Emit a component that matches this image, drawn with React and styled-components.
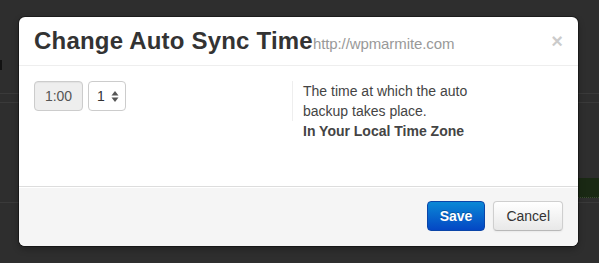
import React from "react";
import styled, { createGlobalStyle } from "styled-components";

const Global = createGlobalStyle`
  html, body { margin: 0; padding: 0; }
  body {
    background: #2e2e2e;
    font-family: "Liberation Sans", Arial, Helvetica, sans-serif;
    font-size: 14px;
    line-height: 20px;
    color: #333;
  }
`;

const Page = styled.div`
  position: relative;
  width: 599px;
  height: 263px;
  overflow: hidden;
  background: #2e2e2e;
`;

const BgLayer = styled.div`
  display: flex;
  flex-direction: column;
  width: 100%;
  height: 100%;
`;

const Mark = styled.div`
  width: 2px;
  height: 10px;
  margin-top: 60px;
  background: #121212;
`;

const Rule = styled.div`
  height: 1px;
  margin-top: ${(p) => p.$gap}px;
  background: #3a3a3a;
`;

const GreenBar = styled.div`
  align-self: flex-end;
  width: 21px;
  height: 19px;
  margin-top: ${(p) => p.$gap}px;
  background: #1a2914;
  border-bottom: 1px dotted #3c4a34;
`;

const Modal = styled.div`
  position: absolute;
  top: 17px;
  left: 19px;
  width: 559px;
  background: #fff;
  border-radius: 6px;
  box-shadow: 0 0 0 1px rgba(0, 0, 0, 0.35), 0 3px 7px rgba(0, 0, 0, 0.3);
  overflow: hidden;
`;

const Header = styled.div`
  display: flex;
  align-items: flex-start;
  height: 30px;
  padding: 9px 15px;
  border-bottom: 1px solid #eee;
`;

const Title = styled.h3`
  flex: 1;
  height: 30px;
  margin: 0;
  font-size: 24px;
  line-height: 30px;
  font-weight: bold;
  letter-spacing: 0.2px;
  color: #333;
  white-space: nowrap;
`;

const Sub = styled.small`
  font-size: 15px;
  line-height: 1;
  font-weight: normal;
  letter-spacing: -0.1px;
  color: #999;
`;

const Close = styled.button`
  margin-top: 5px;
  padding: 0;
  border: 0;
  background: none;
  font-family: "Liberation Sans", Arial, sans-serif;
  font-size: 20px;
  font-weight: bold;
  line-height: 20px;
  color: #000;
  opacity: 0.2;
  cursor: pointer;
`;

const Body = styled.div`
  display: flex;
  height: 90px;
  padding: 15px;
`;

const Controls = styled.div`
  display: flex;
  align-items: flex-start;
  gap: 5px;
  width: 258px;
`;

const TimeBox = styled.span`
  display: inline-block;
  box-sizing: border-box;
  width: 49px;
  height: 30px;
  padding: 4px 0;
  text-align: center;
  color: #555;
  background: #eee;
  border: 1px solid #ccc;
  border-radius: 4px;
  box-shadow: inset 0 1px 1px rgba(0, 0, 0, 0.05);
`;

const Select = styled.div`
  display: flex;
  align-items: center;
  justify-content: space-between;
  box-sizing: border-box;
  width: 38px;
  height: 30px;
  padding: 0 6px 0 8px;
  background: #fff;
  border: 1px solid #ccc;
  border-radius: 4px;
  color: #333;
`;

const Divider = styled.div`
  width: 1px;
  height: 40px;
  background: #eee;
`;

const Help = styled.p`
  margin: 0 0 0 10px;
  width: 190px;
  color: #444;
`;

const Strong = styled.strong`
  color: #444;
`;

const Footer = styled.div`
  display: flex;
  justify-content: flex-end;
  gap: 8px;
  padding: 14px 15px 15px;
  background: #f5f5f5;
  border-top: 1px solid #ddd;
  box-shadow: inset 0 1px 0 #fff;
`;

const Btn = styled.button`
  box-sizing: border-box;
  height: 30px;
  padding: 4px 12px;
  font-family: "Liberation Sans", Arial, sans-serif;
  font-size: 14px;
  line-height: 20px;
  border-radius: 4px;
  cursor: pointer;
  ${(p) =>
    p.$primary
      ? `
    color: #fff;
    font-weight: bold;
    background: linear-gradient(#0a88d6, #0447c4);
    border: 1px solid #0b45a8;
    text-shadow: 0 -1px 0 rgba(0,0,0,0.25);
  `
      : `
    color: #333;
    background: linear-gradient(#ffffff, #e8e8e8);
    border: 1px solid #cfcfcf;
    border-bottom-color: #b8b8b8;
    box-shadow: inset 0 1px 0 rgba(255,255,255,.2), 0 1px 2px rgba(0,0,0,.05);
  `}
`;

const Arrows = () => (
  <svg width="8" height="13" viewBox="0 0 8 13">
    <path d="M4 1 L7.5 5.5 L0.5 5.5 Z" fill="#555" />
    <path d="M4 12 L7.5 7.5 L0.5 7.5 Z" fill="#555" />
  </svg>
);

export default function App() {
  return (
    <>
      <Global />
      <Page>
        <BgLayer>
          <Mark />
          <Rule $gap={23} />
          <Rule $gap={8} />
          <GreenBar $gap={75} />
          <Rule $gap={4} />
        </BgLayer>
        <Modal>
          <Header>
            <Title>
              Change Auto Sync Time<Sub>http://wpmarmite.com</Sub>
            </Title>
            <Close aria-label="Close">×</Close>
          </Header>
          <Body>
            <Controls>
              <TimeBox>1:00</TimeBox>
              <Select>
                <span>1</span>
                <Arrows />
              </Select>
            </Controls>
            <Divider />
            <Help>
              The time at which the auto backup takes place.
              <br />
              <Strong>In Your Local Time Zone</Strong>
            </Help>
          </Body>
          <Footer>
            <Btn $primary>Save</Btn>
            <Btn>Cancel</Btn>
          </Footer>
        </Modal>
      </Page>
    </>
  );
}
